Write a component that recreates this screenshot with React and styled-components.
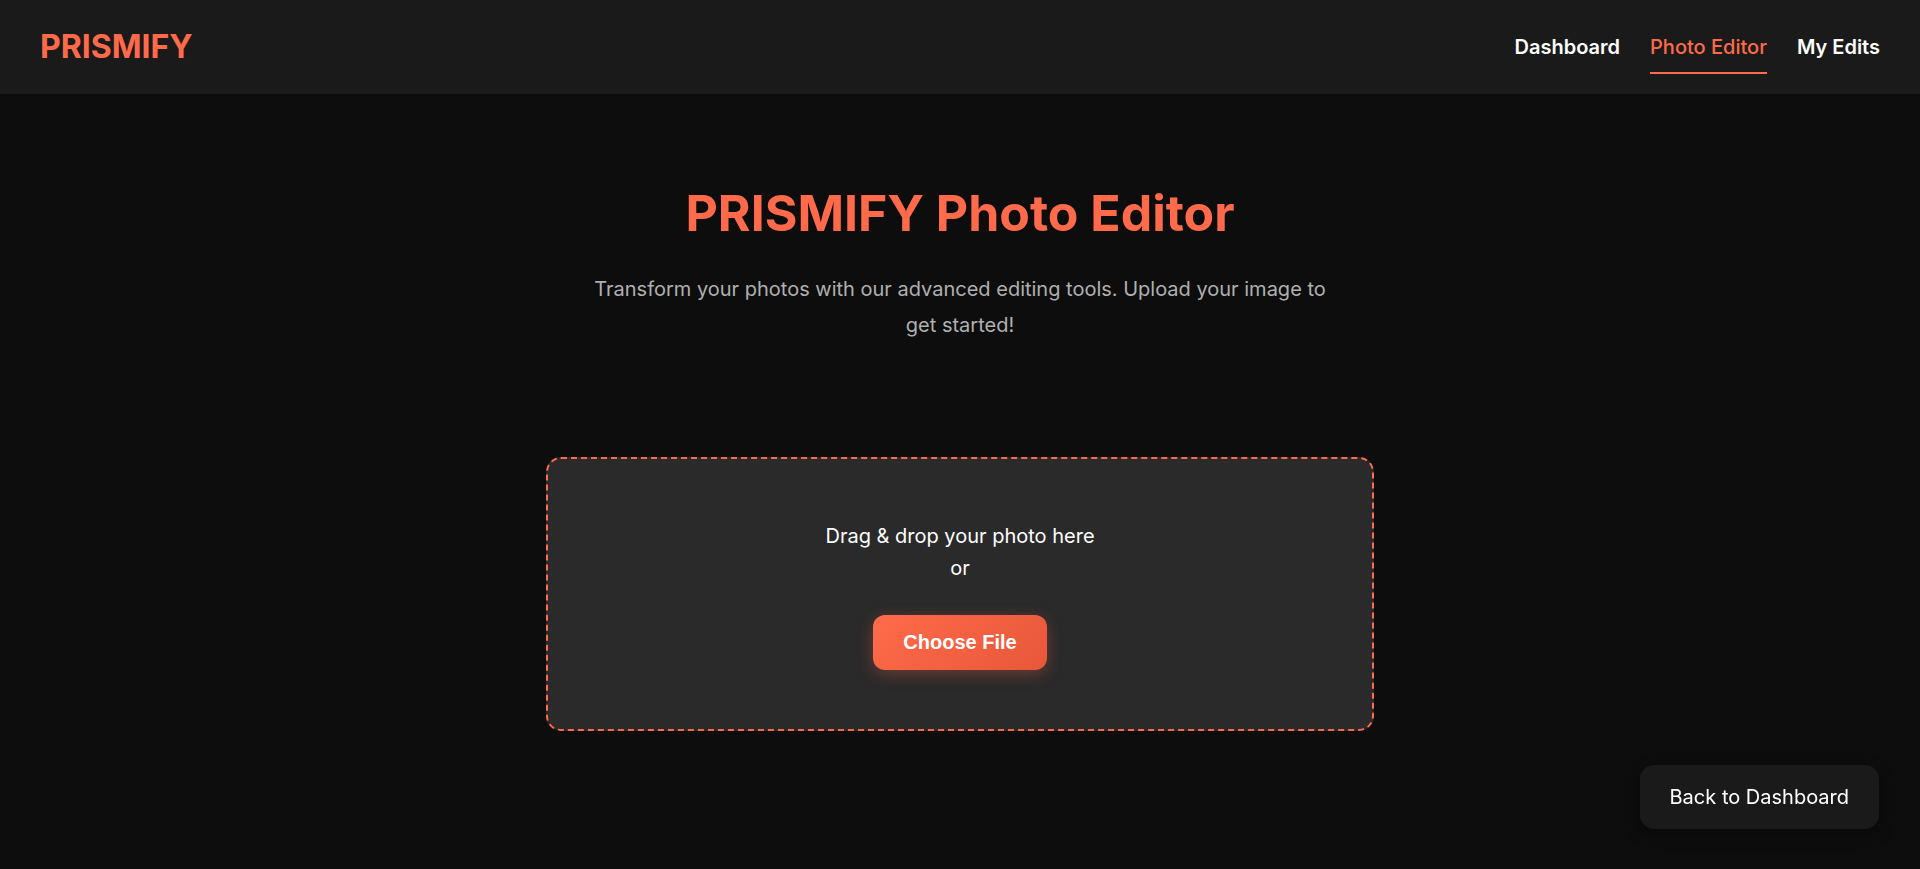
import React from "react";
import styled, { createGlobalStyle } from "styled-components";

const GlobalStyle = createGlobalStyle`
  html, body {
    margin: 0;
    padding: 0;
    background: #0d0d0d;
    color: #ffffff;
    font-family: Inter, "Noto Sans", sans-serif;
  }
  * { box-sizing: border-box; }
`;

const Page = styled.div`
  min-height: 869px;
  background: #0d0d0d;
`;

const Header = styled.header`
  height: 94px;
  background: #1a1a1a;
  display: flex;
  align-items: center;
  justify-content: space-between;
  padding: 0 40px 0 40px;
`;

const Logo = styled.div`
  font-size: 32px;
  font-weight: 700;
  color: #ff6b4a;
  letter-spacing: 0;
  padding-bottom: 1px;
`;

const Nav = styled.nav`
  display: flex;
  align-items: center;
  gap: 30px;
`;

const NavLink = styled.a`
  font-size: 20px;
  color: ${(p) => (p.$active ? "#ff6b4a" : "#ffffff")};
  font-weight: ${(p) => (p.$active ? 500 : 600)};
  text-decoration: none;
  padding: 15px 0 13px;
  border-bottom: 2px solid ${(p) => (p.$active ? "#ff6b4a" : "transparent")};
  line-height: 24px;
  cursor: pointer;
`;

const Main = styled.main`
  display: flex;
  flex-direction: column;
  align-items: center;
  padding: 88px 40px 80px;
`;

const Title = styled.h1`
  margin: 0 0 28px;
  font-size: 50px;
  font-weight: 700;
  line-height: 62px;
  color: #ff6b4a;
  text-align: center;
`;

const Subtitle = styled.p`
  margin: 0;
  max-width: 750px;
  font-size: 20px;
  line-height: 35.5px;
  color: #b0b0b0;
  text-align: center;
`;

const DropZone = styled.div`
  margin-top: 114px;
  width: 828px;
  background: #2a2a2a;
  border: 2px dashed #ff6b4a;
  border-radius: 15px;
  padding: 61px 40px 59px;
  display: flex;
  flex-direction: column;
  align-items: center;
  gap: 31px;
`;

const DropText = styled.p`
  margin: 0;
  font-size: 20px;
  line-height: 32px;
  color: #ffffff;
  text-align: center;
`;

const ChooseButton = styled.button`
  font-family: "Liberation Sans", Arial, sans-serif;
  font-size: 20px;
  font-weight: 700;
  line-height: 23px;
  color: #ffffff;
  border: none;
  border-radius: 12px;
  padding: 16px 30px;
  background: linear-gradient(135deg, #ff6b4a 0%, #e8573a 100%);
  box-shadow: 0 4px 15px rgba(255, 107, 74, 0.3);
  cursor: pointer;
`;

const BackButton = styled.button`
  position: fixed;
  right: 41px;
  bottom: 40px;
  font-family: Inter, "Noto Sans", sans-serif;
  font-size: 20px;
  font-weight: 400;
  line-height: 24px;
  color: #ffffff;
  background: #1a1a1a;
  border: none;
  border-radius: 14px;
  padding: 20px 30px;
  box-shadow: 0 4px 15px rgba(0, 0, 0, 0.4);
  cursor: pointer;
`;

export default function App() {
  return (
    <Page>
      <GlobalStyle />
      <Header>
        <Logo>PRISMIFY</Logo>
        <Nav>
          <NavLink>Dashboard</NavLink>
          <NavLink $active>Photo Editor</NavLink>
          <NavLink>My Edits</NavLink>
        </Nav>
      </Header>
      <Main>
        <Title>PRISMIFY Photo Editor</Title>
        <Subtitle>
          Transform your photos with our advanced editing tools. Upload your image to get started!
        </Subtitle>
        <DropZone>
          <DropText>
            Drag &amp; drop your photo here
            <br />
            or
          </DropText>
          <ChooseButton>Choose File</ChooseButton>
        </DropZone>
      </Main>
      <BackButton>Back to Dashboard</BackButton>
    </Page>
  );
}
